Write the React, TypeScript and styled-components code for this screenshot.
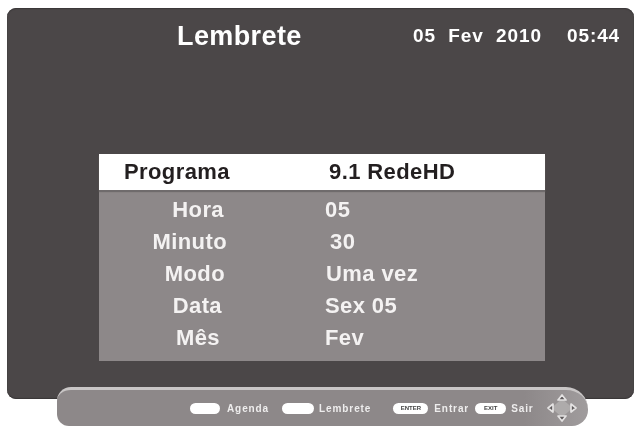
import React from 'react';
import styled, { createGlobalStyle } from 'styled-components';

const Global = createGlobalStyle`
    html, body {
        margin: 0;
        padding: 0;
        background: #fff;
        overflow: hidden;
    }
    body {
        font-family: "Liberation Sans", Arial, sans-serif;
    }
`;

const Page = styled.div`
    position: relative;
    width: 637px;
    height: 426px;
    padding: 8px 0 0 7px;
    box-sizing: border-box;
    filter: blur(0.6px);
`;

const Screen = styled.div`
    width: 627px;
    height: 391px;
    box-sizing: border-box;
    padding-left: 92px;
    background: #4b4748;
    border-radius: 9px;
    box-shadow: inset 0 1px 1px #3a3738, inset 0 -1px 1px #3a3738;
`;

const Header = styled.header`
    display: flex;
    align-items: center;
    height: 56px;
    box-sizing: border-box;
    color: #fff;
    font-weight: bold;
`;

const Title = styled.h1`
    margin: 0 0 0 78px;
    width: 236px;
    font-size: 27px;
    font-weight: bold;
    letter-spacing: 0.4px;
`;

const Clock = styled.span`
    font-size: 19px;
    white-space: pre;
    letter-spacing: 0.9px;
    margin-right: ${(p: { $gap?: number }) => p.$gap ?? 0}px;
`;

const Panel = styled.section`
    width: 446px;
    margin-top: 90px;
    background: #8d8889;
`;

const ProgramRow = styled.div`
    display: flex;
    align-items: center;
    height: 36px;
    background: #fff;
    color: #231f20;
    font-size: 22px;
    font-weight: bold;
    letter-spacing: 0.4px;
    box-shadow: 0 2px 1px #6f6b6c;
    margin-bottom: 4px;
`;

const ProgramLabel = styled.span`
    width: 230px;
    padding-left: 25px;
    box-sizing: border-box;
`;

const ProgramValue = styled.span``;

const Rows = styled.div`
    display: flex;
    flex-direction: column;
    padding-bottom: 7px;
`;

const Row = styled.div`
    display: grid;
    grid-template-columns: 129px 1fr;
    column-gap: 97px;
    height: 32px;
    align-items: center;
    color: #f4f2f2;
    font-size: 22px;
    font-weight: bold;
    letter-spacing: 0.4px;
`;

const Label = styled.span`
    text-align: right;
    white-space: nowrap;
    padding-right: ${(p: { $inset: number }) => p.$inset}px;
`;

const Value = styled.span`
    padding-left: ${(p: { $inset: number }) => p.$inset}px;
`;

const Footer = styled.footer`
    position: absolute;
    left: 57px;
    top: 387px;
    width: 531px;
    height: 39px;
    box-sizing: border-box;
    display: flex;
    align-items: center;
    padding-left: 133px;
    background: linear-gradient(90deg, #8d8889 0%, #8d8889 88%, #a09c9d 100%);
    border-top: 3px solid #c9c6c6;
    border-radius: 14px 22px 16px 12px;
    color: #eeeded;
    font-size: 10px;
    font-weight: bold;
    letter-spacing: 0.9px;
`;

const Pill = styled.span`
    display: inline-flex;
    align-items: center;
    justify-content: center;
    width: ${(p: { $w: number; $gap: number }) => p.$w}px;
    height: 11px;
    margin-right: ${(p: { $w: number; $gap: number }) => p.$gap}px;
    border-radius: 6px;
    background: #fff;
    color: #444;
    font-size: 6px;
    letter-spacing: 0;
`;

const Hint = styled.span`
    margin-right: ${(p: { $gap: number }) => p.$gap}px;
    white-space: nowrap;
`;

const ArrowsIcon = styled.svg`
    flex: none;
    margin-left: 11px;
`;

const Arrows = () => (
    <ArrowsIcon width="34" height="32" viewBox="0 0 34 32">
        <path d="M17 8 L26 16 L17 24 L8 16 Z" fill="#aeabab" stroke="#aeabab" strokeWidth="2" strokeLinejoin="round" />
        <g fill="#5e5a5b" stroke="#e4e2e2" strokeWidth="1.7" strokeLinejoin="round">
            <path d="M13 8 L17 3 L21 8 Z" />
            <path d="M13 24 L17 29 L21 24 Z" />
            <path d="M8 12 L3 16 L8 20 Z" />
            <path d="M26 12 L31 16 L26 20 Z" />
        </g>
    </ArrowsIcon>
);

const fields = [
    { label: 'Hora', value: '05', labelInset: 4, valueInset: 0 },
    { label: 'Minuto', value: '30', labelInset: 1, valueInset: 5 },
    { label: 'Modo', value: 'Uma vez', labelInset: 3, valueInset: 1 },
    { label: 'Data', value: 'Sex 05', labelInset: 6, valueInset: 0 },
    { label: 'Mês', value: 'Fev', labelInset: 8, valueInset: 0 },
];

export default function App() {
    return (
        <Page>
            <Global />
            <Screen>
                <Header>
                    <Title>Lembrete</Title>
                    <Clock $gap={25}>05  Fev  2010</Clock>
                    <Clock>05:44</Clock>
                </Header>
                <Panel>
                    <ProgramRow>
                        <ProgramLabel>Programa</ProgramLabel>
                        <ProgramValue>9.1 RedeHD</ProgramValue>
                    </ProgramRow>
                    <Rows>
                        {fields.map((f) => (
                            <Row key={f.label}>
                                <Label $inset={f.labelInset}>{f.label}</Label>
                                <Value $inset={f.valueInset}>{f.value}</Value>
                            </Row>
                        ))}
                    </Rows>
                </Panel>
            </Screen>
            <Footer>
                <Pill $w={30} $gap={7} />
                <Hint $gap={13}>Agenda</Hint>
                <Pill $w={32} $gap={5} />
                <Hint $gap={22}>Lembrete</Hint>
                <Pill $w={35} $gap={6}>ENTER</Pill>
                <Hint $gap={6}>Entrar</Hint>
                <Pill $w={31} $gap={5}>EXIT</Pill>
                <Hint $gap={0}>Sair</Hint>
                <Arrows />
            </Footer>
        </Page>
    );
}
